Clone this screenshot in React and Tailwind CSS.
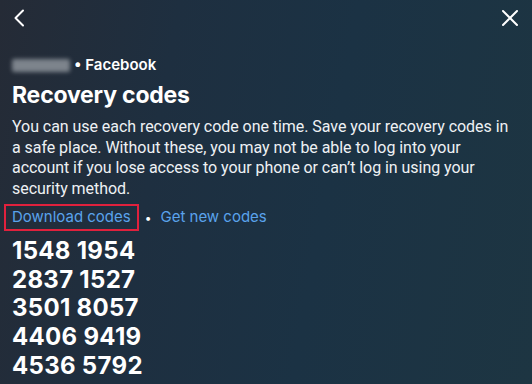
export default function App() {
  const codes = ["1548 1954", "2837 1527", "3501 8057", "4406 9419", "4536 5792"];
  return (
    <div
      className="w-[532px] h-[384px] overflow-hidden text-white bg-[linear-gradient(100deg,#252b36_0%,#1e2f40_30%,#1b3244_60%,#1d3542_100%)]"
      style={{ fontFamily: "Inter, 'Noto Sans', sans-serif" }}
    >
      <div className="flex items-center justify-between h-[35px] pl-[13px] pr-[13px]">
        <svg width="12" height="18" viewBox="0 0 12 18" fill="none">
          <path d="M10 1.5 L2.5 9 L10 16.5" stroke="white" strokeWidth="2" strokeLinecap="round" strokeLinejoin="round" />
        </svg>
        <svg width="18" height="18" viewBox="0 0 18 18" fill="none">
          <path d="M2 2 L16 16 M16 2 L2 16" stroke="white" strokeWidth="2" strokeLinecap="round" />
        </svg>
      </div>
      <div className="px-[12px]">
        <div className="flex items-center h-[18px] mt-[21px] text-[15px] font-semibold">
          <span className="inline-block w-[58px] h-[13px] rounded-[2px] bg-[#7d848c] blur-[2px] mr-[4px]" />
          <span>• Facebook</span>
        </div>
        <h1 className="mt-[7px] text-[23px] leading-[28px] font-bold tracking-[-0.2px]">Recovery codes</h1>
        <p
          className="mt-[8px] text-[16px] leading-[20.5px] text-[#eef1f4] tracking-[-0.05px]"
          style={{ fontFamily: "Roboto, 'Noto Sans', sans-serif" }}
        >
          You can use each recovery code one time. Save your recovery codes in a safe place. Without these, you may not be able to log into your account if you lose access to your phone or can’t log in using your security method.
        </p>
        <div className="flex items-center mt-[5px] -ml-[8px] text-[15px] text-[#5aa3ec]">
          <span className="border-2 border-[#e0213d] px-[6px] h-[27px] flex items-center">Download codes</span>
          <span className="ml-[6px] mr-[9px] text-white text-[12px]">•</span>
          <span>Get new codes</span>
        </div>
        <div className="mt-[6px] flex flex-col">
          {codes.map((c) => (
            <div key={c} className="text-[24px] leading-[28.7px] font-bold tracking-[0.3px]">{c}</div>
          ))}
        </div>
      </div>
    </div>
  );
}
